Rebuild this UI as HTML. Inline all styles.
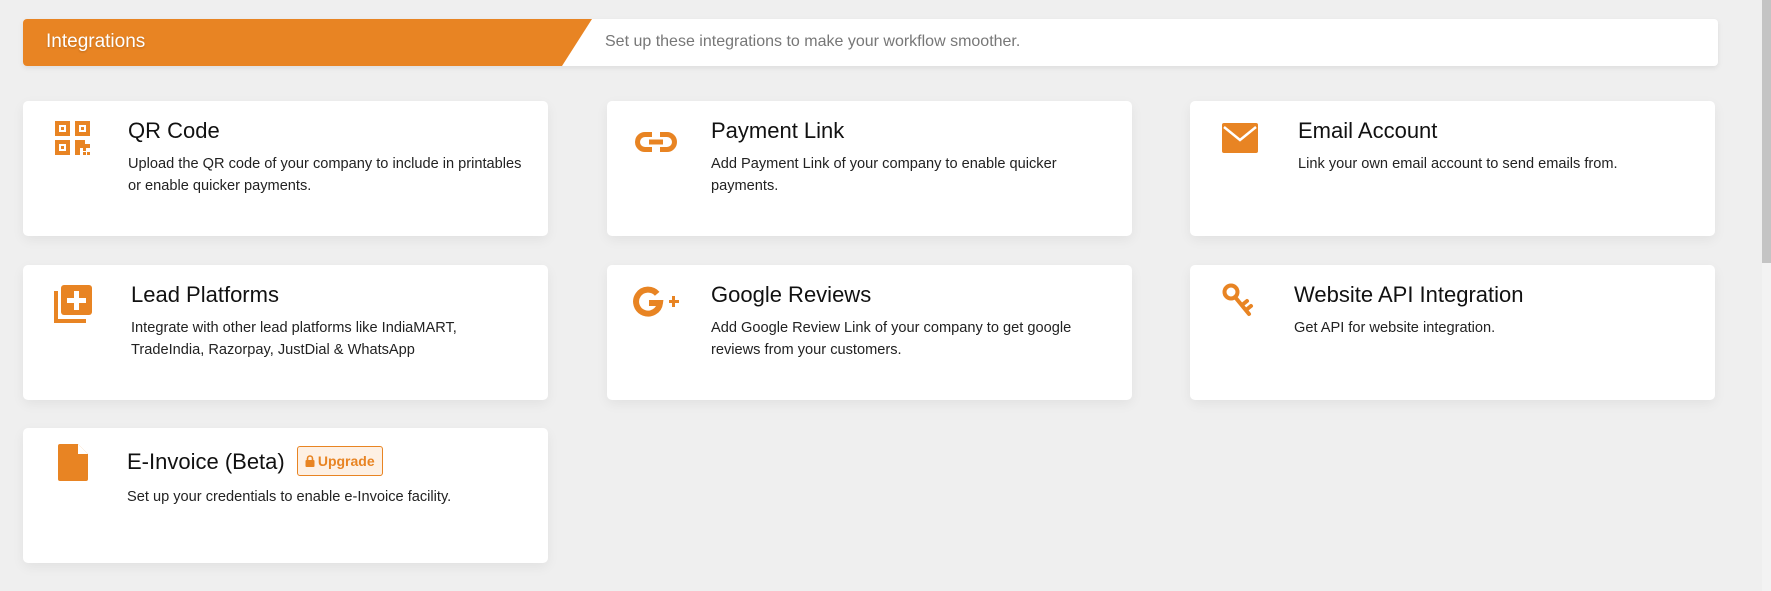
<!DOCTYPE html>
<html><head><style>
*{margin:0;padding:0;box-sizing:border-box}
body{width:1771px;height:591px;background:#efefef;font-family:"Liberation Sans",Arial,sans-serif;position:relative;overflow:hidden}
.hdr{position:absolute;left:23px;top:19px;width:1695px;height:47px;background:#fff;border-radius:4px;box-shadow:0 2px 6px rgba(0,0,0,.08);overflow:hidden}
.org{position:absolute;left:0;top:0;width:569px;height:47px;background:#e88423;clip-path:polygon(0 0,100% 0,539px 100%,0 100%)}
.hdr .t{position:absolute;left:23px;top:12px;color:#fff;font-size:19px;text-shadow:0 1px 2px rgba(0,0,0,.2)}
.hdr .s{position:absolute;left:582px;top:14px;color:#777;font-size:16px}
.card{position:absolute;width:525px;height:135px;background:#fff;border-radius:5px;box-shadow:0 4px 12px rgba(0,0,0,.06)}
.card h3{position:absolute;font-weight:normal;font-size:22px;color:#111;top:17px;white-space:nowrap}
.card p{position:absolute;font-size:14.6px;line-height:22px;color:#222;top:52px;width:398px}
.ic{position:absolute}
.sb{position:absolute;right:0;top:0;width:9px;height:591px;background:#f3f3f3}
.sb div{width:9px;height:263px;background:#c4c4c4}
.up{display:inline-flex;align-items:center;gap:3px;vertical-align:middle;margin-left:6px;border:1px solid #e88423;background:#fdf0e4;color:#e88423;font-size:14px;font-weight:bold;padding:0 7px;height:30px;border-radius:3px;position:relative;top:-2px}
</style></head><body>
<div class="hdr"><div class="org"></div><div class="t">Integrations</div><div class="s">Set up these integrations to make your workflow smoother.</div></div>

<div class="card" style="left:23px;top:101px">
<svg class="ic" style="left:32px;top:20px" width="36" height="34" viewBox="0 0 36 34" fill="#e88423">
<path d="M0 0h15v15H0zM4 4v7h7V4zM6 6h3v3H6z" fill-rule="evenodd"/><path d="M20 0h15v15H20zM24 4v7h7V4zM26 6h3v3h-3z" fill-rule="evenodd"/><path d="M0 19h15v15H0zM4 23v7h7v-7zM6 25h3v3H6z" fill-rule="evenodd"/>
<path d="M20 19h10v4h5v4h-4v3h-3v-3h-3v7h-5z"/><rect x="28" y="31" width="3" height="3"/><rect x="32" y="31" width="3" height="3"/></svg>
<h3 style="left:105px">QR Code</h3>
<p style="left:105px">Upload the QR code of your company to include in printables or enable quicker payments.</p></div>

<div class="card" style="left:607px;top:101px">
<svg class="ic" style="left:28px;top:31px" width="42" height="20" viewBox="0 0 42 20" fill="none" stroke="#e88423" stroke-width="5"><path d="M17 2.5H10a7.5 7.5 0 0 0 0 15h7M25 2.5h7a7.5 7.5 0 0 1 0 15h-7M14 10h14"/></svg>
<h3 style="left:104px">Payment Link</h3>
<p style="left:104px">Add Payment Link of your company to enable quicker payments.</p></div>

<div class="card" style="left:1190px;top:101px">
<svg class="ic" style="left:32px;top:22px" width="36" height="30" viewBox="0 0 36 30"><rect width="36" height="30" rx="2" fill="#e88423"/><path d="M2 4l16 13L34 4" fill="none" stroke="#fff" stroke-width="2.5"/></svg>
<h3 style="left:108px">Email Account</h3>
<p style="left:108px">Link your own email account to send emails from.</p></div>

<div class="card" style="left:23px;top:265px">
<svg class="ic" style="left:31px;top:20px" width="38" height="38" viewBox="0 0 38 38" fill="#e88423"><path d="M0 6h4v28h28v4H0z"/><rect x="7" y="0" width="31" height="30" rx="3"/><path d="M20 6h5v7h7v5h-7v7h-5v-7h-7v-5h7z" fill="#fff"/></svg>
<h3 style="left:108px">Lead Platforms</h3>
<p style="left:108px">Integrate with other lead platforms like IndiaMART, TradeIndia, Razorpay, JustDial &amp; WhatsApp</p></div>

<div class="card" style="left:607px;top:265px">
<svg class="ic" style="left:26px;top:20px" width="48" height="34" viewBox="0 0 48 34"><path d="M24.2 8.8A12 12 0 1 0 27 18H16" fill="none" stroke="#e88423" stroke-width="6"/><path d="M36 15h3v-4h3v4h4v3h-4v4h-3v-4h-3z" fill="#e88423"/></svg>
<h3 style="left:104px">Google Reviews</h3>
<p style="left:104px">Add Google Review Link of your company to get google reviews from your customers.</p></div>

<div class="card" style="left:1190px;top:265px">
<svg class="ic" style="left:32px;top:18px" width="34" height="36" viewBox="0 0 34 36"><g fill="none" stroke="#e88423" stroke-width="4" stroke-linecap="round"><ellipse cx="9" cy="9" rx="6.5" ry="6.5"/><path d="M13 14l14 17M20 22l5-4M24 27l5-4"/></g><ellipse cx="9" cy="8" rx="2.5" ry="2" fill="#fff"/></svg>
<h3 style="left:104px">Website API Integration</h3>
<p style="left:104px">Get API for website integration.</p></div>

<div class="card" style="left:23px;top:428px">
<svg class="ic" style="left:35px;top:16px" width="30" height="37" viewBox="0 0 30 37"><path d="M2 0h18l10 10v25a2 2 0 0 1-2 2H2a2 2 0 0 1-2-2V2a2 2 0 0 1 2-2z" fill="#e88423"/><path d="M20 0v10h10" fill="#fff"/></svg>
<h3 style="left:104px;top:20px">E-Invoice (Beta) <span class="up"><svg width="10" height="12" viewBox="0 0 10 12"><path d="M2.5 5V3.5a2.5 2.5 0 0 1 5 0V5" fill="none" stroke="#e88423" stroke-width="1.6"/><rect x="0.5" y="5" width="9" height="7" rx="1" fill="#e88423"/></svg>Upgrade</span></h3>
<p style="left:104px;top:58px">Set up your credentials to enable e-Invoice facility.</p></div>

<div class="sb"><div></div></div>
</body></html>
